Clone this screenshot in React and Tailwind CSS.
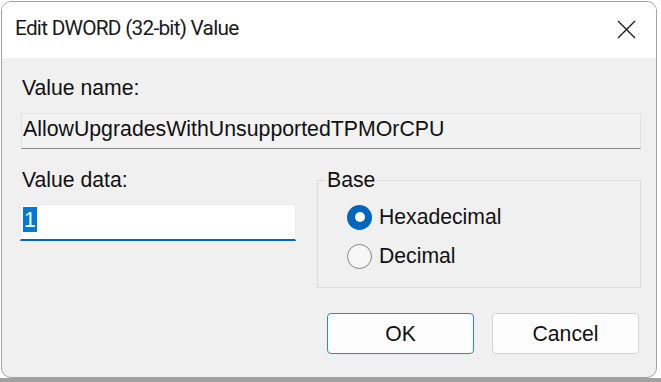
import React from "react";

const ui = { fontFamily: '"Liberation Sans", Arial, sans-serif' };
const title = { fontFamily: 'Roboto, "Noto Sans", sans-serif' };

const Radio = ({ checked, label }) => (
  <label className="flex items-center h-[26px] gap-[7px]">
    {checked ? (
      <span className="w-[25px] h-[25px] rounded-full bg-[#0067c0] flex items-center justify-center">
        <span className="w-[10px] h-[10px] rounded-full bg-white" />
      </span>
    ) : (
      <span className="w-[25px] h-[25px] rounded-full border-[1.5px] border-[#858585] bg-[#f6f6f6]" />
    )}
    <span className="text-[21.2px] leading-[26px] text-[#111]">{label}</span>
  </label>
);

const App = () => {
  return (
    <div className="w-[661px] h-[382px] bg-white overflow-hidden flex flex-col">
      <div className="pl-px pt-px">
        <div className="w-[656px] h-[377px] border border-[#a4a4a4] rounded-[10px] overflow-hidden bg-[#f0f0f0] flex flex-col">
          {/* title bar */}
          <div className="h-[56px] bg-white flex items-center justify-between pl-[13px] pr-[20px]">
            <span style={title} className="text-[20.8px] tracking-[-0.75px] text-[#1a1a1a] pb-[2px]">
              Edit DWORD (32-bit) Value
            </span>
            <svg width="19" height="19" viewBox="0 0 19 19" className="mb-[2px]">
              <path d="M1 1 L18 18 M18 1 L1 18" stroke="#1f1f1f" strokeWidth="1.4" fill="none" />
            </svg>
          </div>

          {/* body */}
          <div style={ui} className="flex flex-col pl-[18px] pr-[15px] text-[#111]">
            <div className="mt-[17px] h-[26px] leading-[26px] text-[21.2px] pl-[2px]">Value name:</div>
            <div className="mt-[12px] ml-px h-[36px] bg-[#f2f2f2] border border-[#e2e2e2] border-b-[#8a8a8a] pl-px text-[21.3px] leading-[26px] pt-[2px]">
              AllowUpgradesWithUnsupportedTPMOrCPU
            </div>

            <div className="mt-[18px] grid grid-cols-[276px_324px] gap-[21px]">
              <div className="flex flex-col">
                <div className="h-[26px] leading-[26px] text-[21.2px] pl-[2px]">Value data:</div>
                <div className="mt-[11px] h-[37px] bg-white border border-[#ededed] border-b-2 border-b-[#0067c0] pl-[2px] pt-[2px]">
                  <span className="inline-block bg-[#0078d7] text-white text-[21.2px] leading-[25px] h-[25px] px-[1px]">1</span>
                </div>
              </div>

              <fieldset className="h-[121px] border border-[#dcdcdc] pl-[29px]">
                <legend className="-ml-[21px] px-[1px] text-[21.2px] leading-[26px]">Base</legend>
                <div className="flex flex-col gap-[13px] pt-[11px]">
                  <Radio checked label="Hexadecimal" />
                  <Radio label="Decimal" />
                </div>
              </fieldset>
            </div>

            <div className="mt-[25px] flex justify-end gap-[18px] pr-[2px]">
              <button className="w-[147px] h-[41px] rounded-[4px] border border-[#2f86d6] bg-[#fdfdfd] text-[21.2px] text-[#111]">
                OK
              </button>
              <button className="w-[147px] h-[41px] rounded-[4px] border border-[#d4d4d4] bg-[#fdfdfd] text-[21.2px] text-[#111]">
                Cancel
              </button>
            </div>
          </div>
        </div>
      </div>
      <div className="flex-1 bg-[#a0a0a0]" />
    </div>
  );
};

export default App;
